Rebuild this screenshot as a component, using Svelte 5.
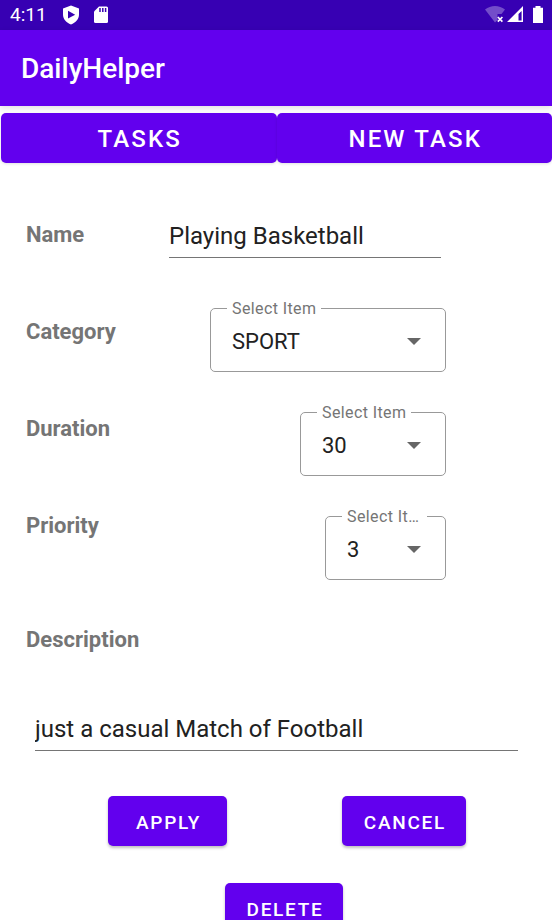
<script>
  let name = $state('Playing Basketball');
  let description = $state('just a casual Match of Football');
  let category = $state('SPORT');
  let duration = $state('30');
  let priority = $state('3');
</script>

{#snippet arrow()}
  <svg class="arrow" width="14" height="7" viewBox="0 0 14 7" aria-hidden="true"><path d="M0 0h14L7 7z" /></svg>
{/snippet}

<div class="app">
  <div class="status">
    <span class="time">4:11</span>
    <svg class="shield" width="16" height="20" viewBox="0 0 16 20" aria-hidden="true">
      <path fill="#fff" fill-rule="evenodd" d="M8 0.5l8 3v6c0 4.600-3.300 8.300-8 10c-4.700-1.700-8-5.400-8-10v-6zM5 5.800v7.700l7.200-3.850z" />
    </svg>
    <svg class="card" width="14" height="18" viewBox="0 0 14 18" aria-hidden="true">
      <path fill="#fff" d="M5 0.500h7.500q1.500 0 1.500 1.500v13.500q0 1.500-1.500 1.500h-11q-1.500 0-1.500-1.500v-10z" />
      <path stroke="#3700b3" stroke-width="1.500" d="M6 2v4M8.800 2v4M11.600 2v4" />
    </svg>
    <span class="spacer"></span>
    <svg width="58" height="20" viewBox="0 0 58 20" aria-hidden="true">
      <path fill="#fff" fill-opacity=".3" d="M0 4.500Q4.500 1 10 1t10 3.500L16.500 9h-4v6L10 17.500z" />
      <path stroke="#fff" stroke-width="1.700" d="M12.800 12l4.600 4.600M17.400 12l-4.600 4.600" />
      <path fill="#fff" fill-rule="evenodd" d="M38 1v16H22zM36.600 6L33.500 9v6.500h3.100z" />
      <path fill="#fff" d="M50.500 1h5v1.700h2.500V18h-10V2.700h2.500z" />
    </svg>
  </div>

  <header><h1>DailyHelper</h1></header>

  <nav>
    <button type="button" class="filled">TASKS</button>
    <button type="button" class="filled">NEW TASK</button>
  </nav>

  <form onsubmit={(e) => e.preventDefault()}>
    <div class="fields">
      <div class="labels">
        <label for="name">Name</label>
        <label for="category">Category</label>
        <label for="duration">Duration</label>
        <label for="priority">Priority</label>
      </div>
      <div class="controls">
        <input id="name" class="line" type="text" bind:value={name} />
        <fieldset class="wide">
          <legend>Select Item</legend>
          <select id="category" bind:value={category}>
            <option>SPORT</option>
            <option>WORK</option>
          </select>
          {@render arrow()}
        </fieldset>
        <fieldset class="medium">
          <legend>Select Item</legend>
          <select id="duration" bind:value={duration}>
            <option>30</option>
            <option>60</option>
          </select>
          {@render arrow()}
        </fieldset>
        <fieldset class="narrow">
          <legend>Select Item</legend>
          <select id="priority" bind:value={priority}>
            <option>1</option>
            <option>2</option>
            <option>3</option>
          </select>
          {@render arrow()}
        </fieldset>
      </div>
    </div>

    <div class="description">
      <label for="description">Description</label>
      <input id="description" class="line" type="text" bind:value={description} />
    </div>

    <div class="actions">
      <button type="submit" class="filled">APPLY</button>
      <button type="button" class="filled">CANCEL</button>
    </div>
    <div class="remove">
      <button type="button" class="filled">DELETE</button>
    </div>
  </form>
</div>

<style>
  :global(body) {
    margin: 0;
    background: #fff;
  }
  .app {
    height: 100vh;
    overflow-y: auto;
    scrollbar-width: none;
    font-family: Roboto, "Liberation Sans", sans-serif;
    color: #212121;
  }
  .app * {
    box-sizing: border-box;
  }
  .status {
    display: flex;
    align-items: center;
    height: 30px;
    padding: 0 9px 0 10px;
    background: #3700b3;
    color: #fff;
  }
  .time {
    font-size: 19px;
    line-height: 30px;
  }
  .shield {
    margin-left: 16px;
  }
  .card {
    margin-left: 15px;
  }
  .spacer {
    flex: 1;
  }
  header {
    display: flex;
    align-items: center;
    height: 76px;
    padding: 2px 21px 0;
    background: #6200ee;
    box-shadow: 0 2px 6px rgba(0, 0, 0, 0.12);
  }
  h1 {
    margin: 0;
    color: #fff;
    font-size: 28px;
    font-weight: 500;
    line-height: 36px;
  }
  .filled {
    height: 50px;
    padding: 2px 20px 0 22px;
    border: 0;
    border-radius: 5px;
    background: #6200ee;
    color: #fff;
    font-family: inherit;
    font-size: 19px;
    font-weight: 500;
    letter-spacing: 0.09em;
    box-shadow: 0 2px 3px rgba(0, 0, 0, 0.25);
  }
  nav {
    display: flex;
    padding: 7px 0 0 1px;
  }
  nav .filled {
    flex: 1;
    font-size: 24px;
    box-shadow: 0 1px 3px rgba(0, 0, 0, 0.12);
  }
  .fields {
    display: flex;
    justify-content: space-between;
    padding: 50px 106px 0 26px;
  }
  .labels {
    display: flex;
    flex-direction: column;
    gap: 69px;
    padding-top: 8px;
  }
  label {
    color: #757575;
    font-size: 22px;
    font-weight: 700;
    line-height: 28px;
  }
  .controls {
    display: flex;
    flex-direction: column;
    align-items: flex-end;
    gap: 30px;
    width: 278px;
  }
  .line {
    width: 100%;
    height: 45px;
    padding: 2px 0 0;
    border: 0;
    border-bottom: 1px solid #757575;
    background: transparent;
    color: #212121;
    font-family: inherit;
    font-size: 24px;
    outline: 0;
  }
  .controls .line {
    width: 272px;
    margin-right: 5px;
  }
  fieldset {
    position: relative;
    height: 74px;
    min-width: 0;
    margin: 0;
    padding: 0 0 8px;
    border: 1px solid #999;
    border-radius: 5px;
  }
  .wide {
    width: 236px;
    margin-top: 10px;
  }
  .medium {
    width: 146px;
  }
  .narrow {
    width: 121px;
  }
  legend {
    max-width: calc(100% - 34px);
    margin-left: 16px;
    padding: 2px 5px 0;
    overflow: hidden;
    color: #757575;
    font-size: 16px;
    line-height: 18px;
    letter-spacing: 0.025em;
    text-overflow: ellipsis;
    white-space: nowrap;
  }
  select {
    width: 100%;
    height: 46px;
    padding: 0 21px;
    border: 0;
    appearance: none;
    background: transparent;
    color: #212121;
    font-family: inherit;
    font-size: 22px;
    outline: 0;
  }
  .arrow {
    position: absolute;
    right: 24px;
    top: 20px;
    fill: #666;
    pointer-events: none;
  }
  .description {
    display: flex;
    flex-direction: column;
    gap: 52px;
    padding: 46px 34px 0 26px;
  }
  .description .line {
    width: auto;
    margin-left: 9px;
  }
  .actions {
    display: flex;
    justify-content: space-between;
    padding: 45px 86px 0 108px;
  }
  .actions .filled {
    min-width: 119px;
  }
  .remove {
    display: flex;
    justify-content: center;
    padding: 37px 0 24px 16px;
  }
</style>
